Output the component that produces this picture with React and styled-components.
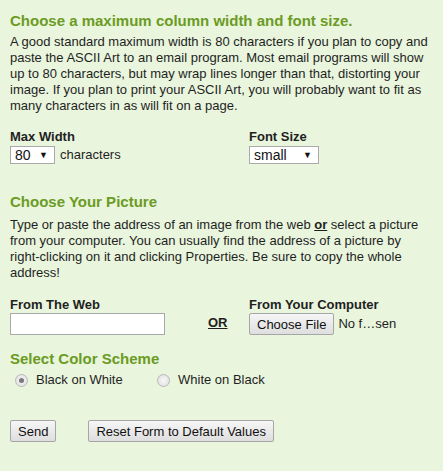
import React, { useState } from "react";
import styled, { createGlobalStyle } from "styled-components";

const Global = createGlobalStyle`
  html, body {
    margin: 0;
    padding: 0;
    background: #e9f5dd;
  }
  body {
    font-family: "Liberation Sans", Arial, sans-serif;
    color: #1f1f1f;
  }
`;

const Page = styled.form`
  width: 443px;
  height: 471px;
  box-sizing: border-box;
  padding: 10px 10px 0 10px;
  background: #e9f5dd;
  font-size: 13px;
  line-height: 16px;
`;

const Heading = styled.h2`
  margin: ${(p) => p.$top || 0}px 0 ${(p) => p.$bottom ?? 4}px 0;
  font-size: 15px;
  line-height: 18px;
  font-weight: bold;
  color: #6b9b23;
`;

const Text = styled.p`
  margin: 0;
  white-space: nowrap;
`;

const Columns = styled.div`
  display: grid;
  grid-template-columns: ${(p) => p.$cols};
  align-items: end;
  margin-top: ${(p) => p.$top}px;
`;

const Field = styled.div`
  display: flex;
  flex-direction: column;
  align-items: flex-start;
  gap: ${(p) => p.$gap || 0}px;
`;

const Label = styled.label`
  font-weight: bold;
  font-size: 13px;
  line-height: 16px;
`;

const Row = styled.div`
  display: flex;
  align-items: center;
  gap: 5px;
`;

const SelectWrap = styled.span`
  position: relative;
  display: inline-flex;
  &::after {
    content: "▼";
    position: absolute;
    right: 7px;
    top: 3px;
    font-size: 9px;
    line-height: 12px;
    color: #111;
    pointer-events: none;
  }
`;

const Select = styled.select`
  box-sizing: border-box;
  width: ${(p) => p.$w}px;
  height: 18px;
  margin: 0;
  padding: 0 0 0 4px;
  appearance: none;
  font-family: "Liberation Sans", Arial, sans-serif;
  font-size: 14px;
  color: #111;
  background: #fff;
  border: 1px solid #aaa;
  border-radius: 0;
`;

const TextInput = styled.input`
  box-sizing: border-box;
  width: 155px;
  height: 22px;
  margin: 0;
  border: 1px solid #a9a9a9;
  background: #fff;
`;

const Or = styled.span`
  font-weight: bold;
  text-decoration: underline;
  align-self: end;
  padding-bottom: 4px;
`;

const FileRow = styled.div`
  display: flex;
  align-items: center;
  gap: 4px;
  height: 22px;
`;

const Button = styled.button`
  box-sizing: border-box;
  height: 22px;
  padding: 0 7px;
  margin: 0;
  font-family: "Liberation Sans", Arial, sans-serif;
  font-size: 13px;
  color: #111;
  background: linear-gradient(#f6f6f6, #dedede);
  border: 1px solid #a6a6a6;
  border-radius: 2px;
`;

const Radios = styled.div`
  display: flex;
  align-items: center;
  margin-top: 1px;
  padding-left: 5px;
`;

const RadioLabel = styled.label`
  display: flex;
  align-items: center;
  gap: 8px;
  width: ${(p) => p.$w}px;
`;

const Radio = styled.span`
  width: 11px;
  height: 11px;
  border-radius: 50%;
  border: 1px solid #b9b9b9;
  background: radial-gradient(circle, #f8f8f8 0, #dcdcdc 100%);
  display: flex;
  align-items: center;
  justify-content: center;
  &::after {
    content: "";
    display: ${(p) => (p.$on ? "block" : "none")};
    width: 5px;
    height: 5px;
    border-radius: 50%;
    background: #7a7a7a;
  }
`;

const Actions = styled.div`
  display: flex;
  gap: 32px;
  margin-top: 32px;
`;

export default function App() {
  const [scheme, setScheme] = useState("bw");
  return (
    <>
      <Global />
      <Page onSubmit={(e) => e.preventDefault()}>
        <Heading $top={2}>Choose a maximum column width and font size.</Heading>
        <Text>
          A good standard maximum width is 80 characters if you plan to copy and<br />
          paste the ASCII Art to an email program. Most email programs will show<br />
          up to 80 characters, but may wrap lines longer than that, distorting your<br />
          image. If you plan to print your ASCII Art, you will probably want to fit as<br />
          many characters in as will fit on a page.
        </Text>

        <Columns $cols="239px 1fr" $top={15}>
          <Field $gap={1}>
            <Label>Max Width</Label>
            <Row>
              <SelectWrap>
                <Select $w={45} defaultValue="80">
                  <option>40</option>
                  <option>60</option>
                  <option>80</option>
                  <option>100</option>
                </Select>
              </SelectWrap>
              <span>characters</span>
            </Row>
          </Field>
          <Field $gap={1}>
            <Label>Font Size</Label>
            <SelectWrap>
              <Select $w={70} defaultValue="small">
                <option>small</option>
                <option>medium</option>
                <option>large</option>
              </Select>
            </SelectWrap>
          </Field>
        </Columns>

        <Heading $top={29} $bottom={6}>Choose Your Picture</Heading>
        <Text>
          Type or paste the address of an image from the web <b><u>or</u></b> select a picture<br />
          from your computer. You can usually find the address of a picture by<br />
          right-clicking on it and clicking Properties. Be sure to copy the whole<br />
          address!
        </Text>

        <Columns $cols="198px 41px 1fr" $top={16}>
          <Field>
            <Label>From The Web</Label>
            <TextInput type="text" />
          </Field>
          <Or>OR</Or>
          <Field>
            <Label>From Your Computer</Label>
            <FileRow>
              <Button type="button">Choose File</Button>
              <span>No f…sen</span>
            </FileRow>
          </Field>
        </Columns>

        <Heading $top={15}>Select Color Scheme</Heading>
        <Radios>
          <RadioLabel $w={142} onClick={() => setScheme("bw")}>
            <Radio $on={scheme === "bw"} />
            Black on White
          </RadioLabel>
          <RadioLabel $w={160} onClick={() => setScheme("wb")}>
            <Radio $on={scheme === "wb"} />
            White on Black
          </RadioLabel>
        </Radios>

        <Actions>
          <Button type="submit">Send</Button>
          <Button type="reset">Reset Form to Default Values</Button>
        </Actions>
      </Page>
    </>
  );
}
